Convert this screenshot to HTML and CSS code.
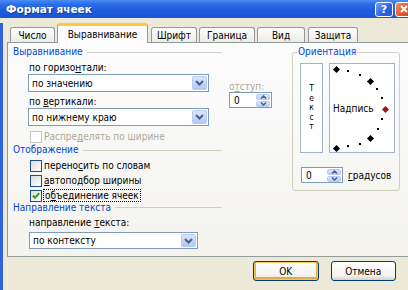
FILE: index.html
```html
<!DOCTYPE html>
<html lang="ru">
<head>
<meta charset="utf-8">
<title>Формат ячеек</title>
<link rel="stylesheet" href="styles.css">
</head>
<body>
<div class="titlebar">
  <span class="title">Формат ячеек</span>
  <span class="tb-btn tb-help">?</span>
  <span class="tb-btn tb-close"><svg width="10" height="10" viewBox="0 0 10 10"><path d="M2 2 L8 8 M8 2 L2 8" stroke="#fff" stroke-width="2"/></svg></span>
</div>
<div class="client">
  <div class="tabs">
    <div class="tab w1">Число</div>
    <div class="tab active w2">Выравнивание</div>
    <div class="tab w3">Шрифт</div>
    <div class="tab w4">Граница</div>
    <div class="tab w5">Вид</div>
    <div class="tab w6">Защита</div>
  </div>
  <div class="panel">
    <div class="left">
      <div class="ghead">Выравнивание</div>
      <div class="align">
        <div class="colA">
          <div class="lbl">по горизо<u>н</u>тали:</div>
          <div class="sel"><span>по значению</span><span class="dd"><svg width="9" height="6" viewBox="0 0 9 6"><path d="M1 1 L4.5 4.5 L8 1" fill="none" stroke="#4D6185" stroke-width="2"/></svg></span></div>
          <div class="lbl lbl2">по <u>в</u>ертикали:</div>
          <div class="sel"><span>по нижнему краю</span><span class="dd"><svg width="9" height="6" viewBox="0 0 9 6"><path d="M1 1 L4.5 4.5 L8 1" fill="none" stroke="#4D6185" stroke-width="2"/></svg></span></div>
        </div>
        <div class="colB">
          <div class="lbl dis-text">о<u>т</u>ступ:</div>
          <div class="spin"><span>0</span><span class="spbtns"><span class="spb"><svg width="7" height="4" viewBox="0 0 7 4"><path d="M1 3.5 L3.5 1 L6 3.5" fill="none" stroke="#4D6185" stroke-width="1.5"/></svg></span><span class="spb"><svg width="7" height="4" viewBox="0 0 7 4"><path d="M1 0.5 L3.5 3 L6 0.5" fill="none" stroke="#4D6185" stroke-width="1.5"/></svg></span></span></div>
        </div>
      </div>
      <div class="cb dis"><span class="box"></span><span class="dis-text">Распре<u>д</u>елять по ширине</span></div>
      <div class="ghead gh2">Отображение</div>
      <div class="cb c1"><span class="box"></span><span>перено<u>с</u>ить по словам</span></div>
      <div class="cb c2"><span class="box"></span><span><u>а</u>втоподбор ширины</span></div>
      <div class="cb c2"><span class="box"><svg width="10" height="10" viewBox="0 0 10 10"><path d="M2 4.5 L4 6.8 L8.2 2.2" fill="none" stroke="#21A121" stroke-width="2"/></svg></span><span class="focus">о<u>б</u>ъединение ячеек</span></div>
      <div class="ghead gh3">Направление текста</div>
      <div class="lbl lbl3">направление <u>т</u>екста:</div>
      <div class="sel sel3"><span>по контексту</span><span class="dd"><svg width="9" height="6" viewBox="0 0 9 6"><path d="M1 1 L4.5 4.5 L8 1" fill="none" stroke="#4D6185" stroke-width="2"/></svg></span></div>
    </div>
    <fieldset class="orient">
      <legend>Ориентация</legend>
      <div class="orow">
        <div class="vtext"><span>Т</span><span>е</span><span>к</span><span>с</span><span>т</span></div>
        <div class="dial">
          <span class="big" style="left:4px;top:3px"></span>
          <span class="sm" style="left:17px;top:6px"></span>
          <span class="sm" style="left:29px;top:10px"></span>
          <span class="big" style="left:38px;top:15px"></span>
          <span class="sm" style="left:46px;top:24px"></span>
          <span class="sm" style="left:51px;top:33px"></span>
          <span class="big red" style="left:53px;top:43px"></span>
          <span class="sm" style="left:51px;top:54px"></span>
          <span class="sm" style="left:47px;top:64px"></span>
          <span class="big" style="left:38px;top:72px"></span>
          <span class="sm" style="left:29px;top:79px"></span>
          <span class="sm" style="left:17px;top:81px"></span>
          <span class="big" style="left:4px;top:82px"></span>
          <span class="caption">Надпись</span>
        </div>
      </div>
      <div class="degrow">
        <div class="spin spin2"><span>0</span><span class="spbtns"><span class="spb"><svg width="7" height="4" viewBox="0 0 7 4"><path d="M1 3.5 L3.5 1 L6 3.5" fill="none" stroke="#4D6185" stroke-width="1.5"/></svg></span><span class="spb"><svg width="7" height="4" viewBox="0 0 7 4"><path d="M1 0.5 L3.5 3 L6 0.5" fill="none" stroke="#4D6185" stroke-width="1.5"/></svg></span></span></div>
        <span class="deg"><u>г</u>радусов</span>
      </div>
    </fieldset>
  </div>
  <div class="buttons">
    <div class="btn ok">OK</div>
    <div class="btn">Отмена</div>
  </div>
</div>
</body>
</html>
```
FILE: styles.css
```css
* { box-sizing: border-box; }
body {
  margin: 0;
  width: 408px;
  height: 290px;
  overflow: hidden;
  background: #ECE9D8;
  font-family: "DejaVu Sans Condensed", "DejaVu Sans", sans-serif;
  font-size: 10px;
  color: #000;
}
u { text-decoration: underline; text-underline-offset: 1px; }

.titlebar {
  height: 18px;
  display: flex;
  align-items: center;
  padding-left: 6px;
  background: linear-gradient(#4A8CF6 0%, #2B6BE6 25%, #1F5CDD 60%, #1B55D2 100%);
}
.title {
  flex: 1;
  color: #fff;
  font-family: "DejaVu Sans", sans-serif;
  font-weight: bold;
  font-size: 10.5px;
  text-shadow: 1px 1px 0 #0F3A9C;
}
.tb-btn {
  flex: 0 0 18px;
  height: 15px;
  border: 1px solid #fff;
  border-radius: 3px;
  display: flex;
  align-items: center;
  justify-content: center;
  color: #fff;
  font-family: "DejaVu Sans", sans-serif;
  font-weight: bold;
  font-size: 11px;
}
.tb-help {
  background: linear-gradient(135deg, #6FA0F8, #2A62E0 60%, #2258D6);
  margin-right: 2px;
}
.tb-close {
  background: linear-gradient(135deg, #F0906A, #E0542C 60%, #C8441E);
  margin-right: -5px;
}

.client {
  height: 272px;
  border-left: 3px solid #3063DB;
  padding-left: 4px;
}

.tabs {
  display: flex;
  align-items: flex-end;
  height: 19px;
  margin-top: 5px;
  padding-left: 3px;
  position: relative;
  z-index: 1;
}
.tab {
  height: 15px;
  border: 1px solid #919B9C;
  border-bottom: none;
  border-radius: 3px 3px 0 0;
  background: linear-gradient(#FFFFFF, #ECEBE6);
  display: flex;
  align-items: center;
  justify-content: center;
  margin-right: 2px;
  padding-top: 1px;
}
.tab.active {
  height: 20px;
  margin-bottom: -1px;
  background: #FCFCFE;
  border-top: 3px solid #FFC73C;
  padding-top: 0;
}
.w1 { width: 45px; }
.w2 { width: 91px; margin-right: 3px; }
.w3 { width: 46px; }
.w4 { width: 56px; }
.w5 { width: 48px; margin-right: 3px; }
.w6 { width: 50px; }

.panel {
  width: 405px;
  height: 215px;
  border: 1px solid #919B9C;
  background: linear-gradient(#FCFCFE, #F4F3EE);
  display: flex;
  align-items: flex-start;
  padding: 3px 0 0 5px;
}
.left {
  width: 279px;
  display: flex;
  flex-direction: column;
}
.ghead {
  width: 209px;
  height: 12px;
  line-height: 12px;
  display: flex;
  align-items: center;
  color: #0046D5;
}
.ghead::after {
  content: "";
  flex: 1;
  height: 1px;
  background: #D0D0BF;
  margin-left: 4px;
}
.gh2 { margin-top: 1px; }
.gh3 { height: 11px; line-height: 11px; }

.lbl {
  height: 12px;
  line-height: 12px;
  padding-left: 1px;
  white-space: nowrap;
}
.align {
  display: flex;
  margin-top: 4px;
}
.colA {
  margin-left: 15px;
  width: 181px;
}
.lbl2 { margin-top: 4px; }
.lbl3 { margin-top: 4px; margin-left: 15px; }

.sel {
  height: 18px;
  border: 1px solid #7F9DB9;
  background: #fff;
  display: flex;
  align-items: center;
  justify-content: space-between;
  padding: 1px 1px 1px 3px;
}
.sel3 {
  width: 169px;
  height: 17px;
  margin-top: 3px;
  margin-left: 16px;
}
.dd {
  width: 15px;
  height: 100%;
  border: 1px solid #B9CAF3;
  border-radius: 2px;
  background: linear-gradient(#DCE6FD, #C2D3FB 60%, #B2C7F8);
  display: flex;
  align-items: center;
  justify-content: center;
}

.colB {
  margin-left: 20px;
  padding-top: 19px;
}
.colB .lbl { height: 11px; line-height: 11px; padding-left: 0; }
.dis-text { color: #ACA899; }

.spin {
  width: 43px;
  height: 16px;
  border: 1px solid #7F9DB9;
  background: #fff;
  display: flex;
  align-items: center;
  justify-content: space-between;
  padding: 1px 1px 1px 4px;
}
.spbtns {
  width: 14px;
  height: 100%;
  display: flex;
  flex-direction: column;
  gap: 1px;
}
.spb {
  flex: 1;
  border: 1px solid #B9CAF3;
  border-radius: 2px;
  background: linear-gradient(#DCE6FD, #BBCEF9);
  display: flex;
  align-items: center;
  justify-content: center;
}

.cb {
  height: 13px;
  display: flex;
  align-items: center;
  padding-left: 17px;
  white-space: nowrap;
}
.cb.dis { margin-top: 4px; }
.cb.c1 { margin-top: 3px; }
.cb.c2 { margin-top: 2px; }
.box {
  width: 12px;
  height: 12px;
  border: 1px solid #1C5180;
  background: linear-gradient(135deg, #DCDCD7, #FFFFFF);
  margin-right: 2px;
  display: flex;
  align-items: center;
  justify-content: center;
}
.cb.dis .box {
  border-color: #CAC8BB;
  background: #fff;
}
.focus {
  outline: 1px dotted #000;
  outline-offset: 0;
  padding: 0 1px;
  line-height: 11px;
}

.orient {
  margin: 0;
  width: 108px;
  padding: 0 4px 7px 7px;
  border: 1px solid #D0D0BF;
  border-radius: 3px;
  min-width: 0;
}
.orient legend {
  color: #0046D5;
  padding: 0 1px;
  margin-left: -3px;
  line-height: 12px;
}
.orow {
  display: flex;
  gap: 6px;
  margin-top: 5px;
}
.vtext {
  width: 23px;
  height: 90px;
  border: 1px solid #A7B4C6;
  background: #fff;
  display: flex;
  flex-direction: column;
  align-items: center;
  justify-content: center;
  font-size: 8.5px;
  line-height: 9.4px;
}
.dial {
  position: relative;
  width: 66px;
  height: 90px;
  border: 1px solid #A7B4C6;
  background: #fff;
}
.big {
  position: absolute;
  width: 5px;
  height: 5px;
  background: #000;
  transform: rotate(45deg);
}
.big.red { background: #A0141E; }
.sm {
  position: absolute;
  width: 2px;
  height: 2px;
  background: #000;
}
.caption {
  position: absolute;
  left: 3px;
  top: 39px;
  line-height: 12px;
}
.degrow {
  display: flex;
  align-items: center;
  margin-top: 14px;
  padding-left: 1px;
}
.spin2 { width: 42px; }
.deg { margin-left: 5px; }

.buttons {
  display: flex;
  margin-top: 4px;
  padding-left: 246px;
}
.btn {
  width: 68px;
  height: 20px;
  border: 1px solid #003C74;
  border-radius: 3px;
  background: linear-gradient(#FFFFFF, #F4F3EE 75%, #D8D2C6);
  display: flex;
  align-items: center;
  justify-content: center;
  margin-right: 12px;
}
.btn.ok {
  box-shadow: inset 0 0 0 1px #F9C55C, inset 0 -1px 0 2px #F0A838;
}
```
